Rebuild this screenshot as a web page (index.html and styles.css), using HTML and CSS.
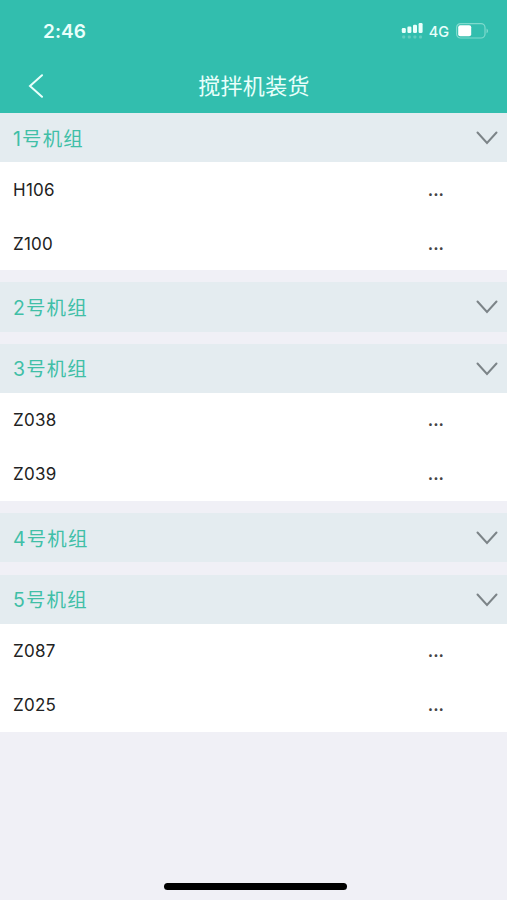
FILE: index.html
```html
<!DOCTYPE html>
<html lang="zh-CN">
<head>
<meta charset="UTF-8">
<meta name="viewport" content="width=device-width, initial-scale=1">
<title>搅拌机装货</title>
<link rel="stylesheet" href="styles.css">
</head>
<body>
<div class="header">
  <div class="status">
    <span class="clock">2:46</span>
    <div class="status-right">
      <svg class="signal" width="22" height="18" viewBox="0 0 22 18">
        <g fill="#e9fffb">
          <rect x="0.8" y="6" width="4" height="5" rx="1.2"/>
          <rect x="6.4" y="4.5" width="4" height="6.5" rx="1.2"/>
          <rect x="12" y="2.8" width="4" height="8.2" rx="1.2"/>
          <rect x="17.6" y="1" width="4" height="10" rx="1.2"/>
        </g>
        <g fill="#62cdbf">
          <rect x="1.2" y="13.5" width="3" height="3" rx="1"/>
          <rect x="6.8" y="13.5" width="3" height="3" rx="1"/>
          <rect x="12.4" y="13.5" width="3" height="3" rx="1"/>
          <rect x="18" y="13.5" width="3" height="3" rx="1"/>
        </g>
      </svg>
      <span class="network">4G</span>
      <svg class="battery" width="33" height="16" viewBox="0 0 33 16">
        <rect x="0.6" y="0.6" width="28.4" height="14.4" rx="4" fill="none" stroke="#7fdacd" stroke-width="1.2"/>
        <rect x="2.2" y="2.3" width="13" height="11" rx="2" fill="#fff"/>
        <path d="M30.6 5.4c1.6.7 1.6 4.1 0 4.8z" fill="#8fe0d5"/>
      </svg>
    </div>
  </div>
  <div class="navbar">
    <svg class="back" width="16" height="24" viewBox="0 0 16 24"><path d="M14 1.2L2 12l12 10.8" /></svg>
    <div class="title">搅拌机装货</div>
  </div>
</div>

<div class="list">
  <div class="group">
    <div class="group-head"><span>1号机组</span><svg class="arrow" width="22" height="14" viewBox="0 0 22 14"><path d="M1.5 1.5L11 12l9.5-10.5"/></svg></div>
    <div class="row"><span>H106</span><span class="more">...</span></div>
    <div class="row"><span>Z100</span><span class="more">...</span></div>
  </div>
  <div class="group">
    <div class="group-head"><span>2号机组</span><svg class="arrow" width="22" height="14" viewBox="0 0 22 14"><path d="M1.5 1.5L11 12l9.5-10.5"/></svg></div>
  </div>
  <div class="group">
    <div class="group-head"><span>3号机组</span><svg class="arrow" width="22" height="14" viewBox="0 0 22 14"><path d="M1.5 1.5L11 12l9.5-10.5"/></svg></div>
    <div class="row"><span>Z038</span><span class="more">...</span></div>
    <div class="row"><span>Z039</span><span class="more">...</span></div>
  </div>
  <div class="group">
    <div class="group-head"><span>4号机组</span><svg class="arrow" width="22" height="14" viewBox="0 0 22 14"><path d="M1.5 1.5L11 12l9.5-10.5"/></svg></div>
  </div>
  <div class="group">
    <div class="group-head"><span>5号机组</span><svg class="arrow" width="22" height="14" viewBox="0 0 22 14"><path d="M1.5 1.5L11 12l9.5-10.5"/></svg></div>
    <div class="row"><span>Z087</span><span class="more">...</span></div>
    <div class="row"><span>Z025</span><span class="more">...</span></div>
  </div>
</div>
<div class="home-bar"></div>
</body>
</html>
```
FILE: styles.css
```css
* { box-sizing: border-box; }
body { margin: 0; height: 900px; display: flex; flex-direction: column; overflow: hidden; background: #f0f0f6; font-family: Inter, "Noto Sans CJK SC", sans-serif; }
svg { display: block; flex: none; }

.header { height: 113px; flex: none; background: #32beae; color: #e9fffb; }
.status { display: flex; align-items: center; justify-content: space-between; height: 61px; padding: 1px 18px 0 43px; }
.clock { font-size: 19px; font-weight: 600; letter-spacing: 0.1px; }
.status-right { display: flex; align-items: center; }
.network { margin: 0 7px 0 6px; font-size: 14.5px; font-weight: 500; }
.navbar { display: grid; grid-template-columns: 60px 1fr 60px; align-items: center; height: 50px; }
.back { margin-left: 28px; fill: none; stroke: #e9fffb; stroke-width: 2; stroke-linecap: round; }
.title { padding-left: 1px; text-align: center; font-size: 22px; letter-spacing: 0.3px; line-height: 50px; }

.list { display: flex; flex-direction: column; gap: 12.2px; }
.group-head { display: flex; align-items: center; justify-content: space-between; height: 49.2px; padding: 0 9px 0 13px; background: #e4ecf0; color: #40bfa7; font-size: 19.4px; letter-spacing: 1.2px; }
.group-head span { padding-bottom: 1px; }
.arrow { margin-top: 1px; fill: none; stroke: #7c8488; stroke-width: 2; stroke-linecap: round; }
.row { display: flex; align-items: center; justify-content: space-between; height: 54px; padding: 1px 63px 0 13px; background: #fff; color: #222; font-size: 17px; letter-spacing: 0.25px; }
.more { color: #444; font-weight: 600; letter-spacing: 0; }

.home-bar { width: 183px; height: 7px; margin: auto auto 10px 164px; border-radius: 4px; background: #000; }
```
